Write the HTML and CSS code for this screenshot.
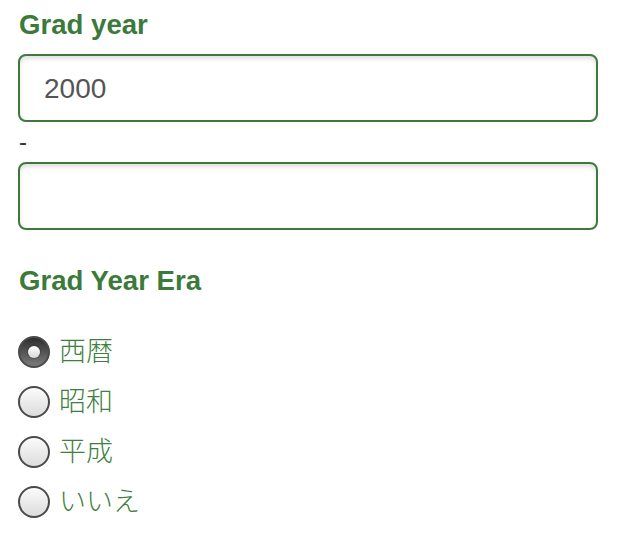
FILE: index.html
```html
<!DOCTYPE html>
<html>
<head>
<meta charset="utf-8">
<link rel="stylesheet" href="styles.css">
</head>
<body>
<form class="form">
  <div class="field">
    <label class="title" for="y1">Grad year</label>
    <input class="text" id="y1" type="text" value="2000">
    <div class="dash">-</div>
    <input class="text" id="y2" type="text" value="">
  </div>
  <fieldset class="era">
    <legend class="title era-title">Grad Year Era</legend>
    <label class="opt"><span class="radio checked"></span><span class="opt-text">西暦</span></label>
    <label class="opt"><span class="radio"></span><span class="opt-text">昭和</span></label>
    <label class="opt"><span class="radio"></span><span class="opt-text">平成</span></label>
    <label class="opt"><span class="radio"></span><span class="opt-text">いいえ</span></label>
  </fieldset>
</form>
</body>
</html>
```
FILE: styles.css
```css
html, body {
  margin: 0;
  padding: 0;
  background: #fff;
}
body {
  font-family: "Liberation Sans", "Noto Sans CJK JP", Arial, sans-serif;
  color: #3b7a3b;
}
.form {
  padding: 8px 22px 0 18px;
}
.field {
  display: flex;
  flex-direction: column;
}
.title {
  display: block;
  font-weight: bold;
  font-size: 27.6px;
  line-height: 34px;
  color: #3b7a3b;
  padding-left: 1px;
}
.field .title {
  margin-bottom: 12px;
}
.text {
  box-sizing: border-box;
  width: 580px;
  height: 68px;
  margin: 0;
  border: 2px solid #3b7a3b;
  border-radius: 8px;
  padding: 2px 24px 0;
  font-family: "Liberation Sans", Arial, sans-serif;
  font-size: 28px;
  color: #555;
  background: #fff;
  box-shadow: inset 0 3px 4px rgba(0,0,0,0.12);
  outline: none;
}
.dash {
  font-size: 24px;
  line-height: 40px;
  color: #333;
  padding-left: 1px;
}
.era {
  border: 0;
  margin: 0;
  padding: 0;
  margin-top: 34px;
}
.era-title {
  padding: 0 0 0 1px;
  margin-bottom: 29px;
}
.era legend {
  float: left;
  width: 100%;
}
.opt {
  clear: both;
  display: flex;
  align-items: center;
  height: 50px;
  gap: 9px;
}
.radio {
  box-sizing: border-box;
  width: 32px;
  height: 32px;
  border-radius: 50%;
  border: 2px solid #4a4a4a;
  background: linear-gradient(#fbfbfb, #dcdcdc);
  flex: none;
  position: relative;
}
.radio.checked {
  background: linear-gradient(#2e2e2e, #7a7a7a);
}
.radio.checked::after {
  content: "";
  position: absolute;
  left: 8px;
  top: 8px;
  width: 12px;
  height: 12px;
  border-radius: 50%;
  background: linear-gradient(#ffffff, #d8d8d8);
  box-shadow: 0 0 2px rgba(0,0,0,0.5);
}
.opt-text {
  font-family: "Noto Sans CJK JP", sans-serif;
  font-weight: 300;
  font-size: 27px;
  line-height: 34px;
  margin-top: -4px;
  color: #3f7f3f;
}
```
